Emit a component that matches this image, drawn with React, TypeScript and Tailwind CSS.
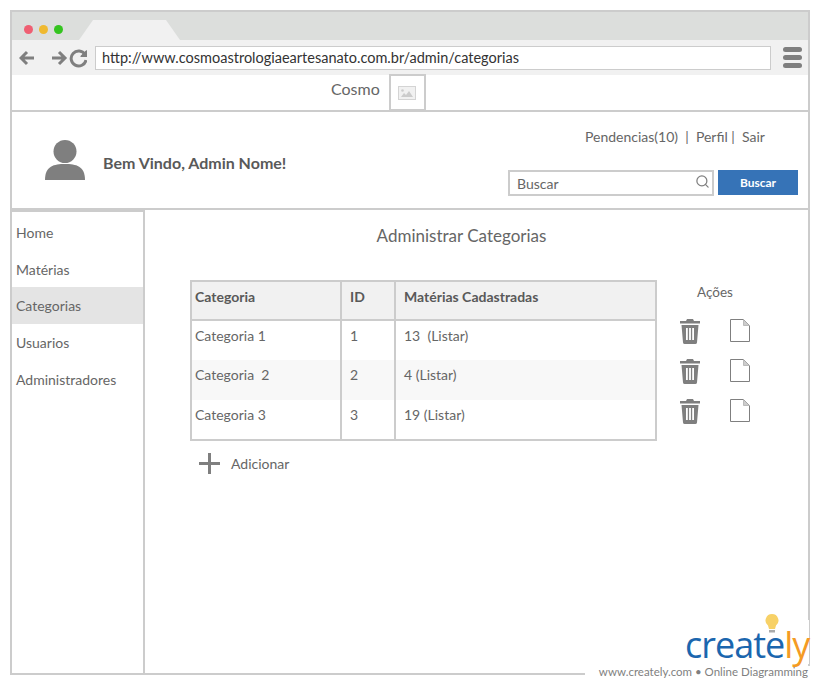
import { Search } from "lucide-react";

const menu = ["Home", "Matérias", "Categorias", "Usuarios", "Administradores"];

const rows = [
  { name: "Categoria 1", id: "1", count: "13  (Listar)", bg: "" },
  { name: "Categoria  2", id: "2", count: "4 (Listar)", bg: "bg-[#f8f8f8]" },
  { name: "Categoria 3", id: "3", count: "19 (Listar)", bg: "" },
];

const TrashIcon = () => (
  <svg width="20" height="25" viewBox="0 0 20 25" fill="#7f7f7f">
    <path d="M7 0h6l1 2h6v2.500H0V2h6z" />
    <path fillRule="evenodd" d="M1.500 6h17L17 23.500q-.2 1.500-1.700 1.500H4.700q-1.500 0-1.700-1.500zM6 9v12h1.800V9zm3.100 0v12h1.800V9zm3.100 0v12H14V9z" />
  </svg>
);

const DocIcon = () => (
  <svg width="20" height="23" viewBox="0 0 20 23" fill="none" stroke="#7f7f7f" strokeWidth="1">
    <path d="M.5.5h13l6 6v16H.5z" />
    <path d="M13.500.5v6h6" fill="#ccc" stroke="#bbb" />
  </svg>
);

export default function App() {
  return (
    <div className="relative h-[685px] w-[820px] overflow-hidden bg-white pl-[10px] pt-[10px] font-['Lato',sans-serif] text-[#595959]">
      <div className="flex h-[665px] w-[800px] flex-col border-2 border-[#cccccc]">
        {/* browser tabs */}
        <div className="relative h-[28px] shrink-0 bg-[#dcdedc]">
          <div className="absolute left-[12px] top-[13px] flex gap-[6px]">
            <span className="h-[9px] w-[9px] rounded-full bg-[#ef5f72]" />
            <span className="h-[9px] w-[9px] rounded-full bg-[#efb92f]" />
            <span className="h-[9px] w-[9px] rounded-full bg-[#34c41f]" />
          </div>
          <svg className="absolute left-[67px] top-[8px]" width="101" height="20" viewBox="0 0 101 20">
            <path d="M0 20 14 0h73l14 20z" fill="#f1f1f1" />
          </svg>
        </div>

        {/* browser toolbar */}
        <div className="flex h-[35px] shrink-0 items-center bg-[#f1f1f1] pl-[7px]">
          <svg width="68" height="22" viewBox="0 0 68 22" fill="none" stroke="#7f7f7f" strokeWidth="3" className="mt-[2px]">
            <path d="M15 10H2M8 4l-6 6 6 6" />
            <path d="M33 10h13M40 4l6 6-6 6" />
            <path d="M66 6.500A7.500 7.500 0 1 0 67 12" />
            <path d="M67.500 2v6h-6" fill="#7f7f7f" stroke="none" />
            <path d="M68 2v7h-7z" fill="#7f7f7f" stroke="none" />
          </svg>
          <div className="ml-[8px] flex h-[24px] w-[676px] items-center border border-[#cccccc] bg-white pl-[6px] text-[14.500px] text-[#333333]">
            http://www.cosmoastrologiaeartesanato.com.br/admin/categorias
          </div>
          <div className="ml-[12px] flex flex-col gap-[3px]">
            <span className="h-[5px] w-[19px] rounded-full bg-[#7f7f7f]" />
            <span className="h-[5px] w-[19px] rounded-full bg-[#7f7f7f]" />
            <span className="h-[5px] w-[19px] rounded-full bg-[#7f7f7f]" />
          </div>
        </div>

        {/* logo row */}
        <div className="flex h-[37px] shrink-0 border-b-2 border-[#cccccc] pl-[319px]">
          <span className="mt-[2px] text-[16px] text-[#666666]">Cosmo</span>
          <div className="ml-[9px] mt-[-1px] flex h-[37px] w-[37px] items-center justify-center border-2 border-[#cccccc] bg-white">
            <svg width="18" height="14" viewBox="0 0 18 14">
              <rect x="0.500" y="0.500" width="17" height="13" fill="#f1f1f1" stroke="#d4d4d4" />
              <path d="M3 11l3-4 2 2 3-4 4 6z" fill="#cccccc" />
              <circle cx="4.500" cy="4.500" r="1.300" fill="#cccccc" />
            </svg>
          </div>
        </div>

        {/* header */}
        <div className="flex h-[98px] shrink-0 border-b-2 border-[#cccccc]">
          <svg className="ml-[33px] mt-[28px]" width="40" height="40" viewBox="0 0 40 40" fill="#7f7f7f">
            <circle cx="20" cy="11.500" r="11.500" />
            <path d="M0 40c0-14 9-16 20-16s20 2 20 16z" />
          </svg>
          <span className="ml-[18px] mt-[41px] text-[16px] font-bold leading-[20px] text-[#595959]">Bem Vindo, Admin Nome!</span>
          <div className="ml-auto flex w-[300px] flex-col">
            <div className="mt-[16px] whitespace-pre pl-[77px] text-[14px] leading-[17px] text-[#666666]">
              Pendencias(10)  |  Perfil |  Sair
            </div>
            <div className="mt-[25px] flex items-start">
              <div className="relative flex h-[26px] w-[206px] items-center border-2 border-[#cccccc] pl-[7px] text-[14px] text-[#666666]">
                Buscar
                <Search size={15} strokeWidth={2} className="absolute right-[2px] top-[2px] text-[#7f7f7f]" />
              </div>
              <button className="ml-[4px] h-[25px] w-[80px] bg-[#3673b7] text-[12px] font-bold text-white">Buscar</button>
            </div>
          </div>
        </div>

        <div className="flex min-h-0 flex-1">
          {/* sidebar */}
          <nav className="flex w-[133px] shrink-0 flex-col border-r-2 border-t-2 border-[#cccccc] pt-[2px]">
            {menu.map((item) => (
              <div
                key={item}
                className={`flex h-[36.700px] items-center pl-[4px] text-[14px] text-[#666666] ${item === "Categorias" ? "bg-[#e4e4e4]" : ""}`}
              >
                {item}
              </div>
            ))}
          </nav>

          {/* content */}
          <main className="min-w-0 flex-1">
            <h1 className="mr-[30px] mt-[15px] text-center text-[17px] leading-[22px] text-[#666666]">Administrar Categorias</h1>
            <div className="ml-[45px] mt-[33px] flex items-start">
              <div>
                <table className="w-[467px] table-fixed border-collapse border-2 border-[#cccccc] text-[14px] text-[#666666]">
                  <colgroup>
                    <col className="w-[150px]" />
                    <col className="w-[54px]" />
                    <col />
                  </colgroup>
                  <thead>
                    <tr className="h-[39px] border-b-2 border-[#cccccc] bg-[#f1f1f1] align-top text-[#595959]">
                      <th className="border-r-2 border-[#cccccc] pl-[3px] pt-[4px] text-left font-bold">Categoria</th>
                      <th className="border-r-2 border-[#cccccc] pl-[8px] pt-[4px] text-left font-bold">ID</th>
                      <th className="pl-[8px] pt-[4px] text-left font-bold">Matérias Cadastradas</th>
                    </tr>
                  </thead>
                  <tbody>
                    {rows.map((row) => (
                      <tr key={row.id} className={`h-[40px] align-top whitespace-pre ${row.bg}`}>
                        <td className="border-r-2 border-[#cccccc] pl-[3px] pt-[4px]">{row.name}</td>
                        <td className="border-r-2 border-[#cccccc] pl-[8px] pt-[4px]">{row.id}</td>
                        <td className="pl-[8px] pt-[4px]">{row.count}</td>
                      </tr>
                    ))}
                  </tbody>
                </table>
                <div className="ml-[9px] mt-[12px] flex items-center">
                  <svg width="21" height="21" viewBox="0 0 21 21" fill="#7f7f7f">
                    <path d="M9 0h3v9h9v3h-9v9H9v-9H0V9h9z" />
                  </svg>
                  <span className="ml-[11px] text-[14px] text-[#666666]">Adicionar</span>
                </div>
              </div>

              <div className="ml-[23px] w-[70px]">
                <div className="mt-[4px] text-center text-[13.500px] leading-[17px] text-[#666666]">Ações</div>
                <div className="mt-[18px] flex flex-col gap-[15px]">
                  {rows.map((row) => (
                    <div key={row.id} className="flex items-start justify-between">
                      <TrashIcon />
                      <DocIcon />
                    </div>
                  ))}
                </div>
              </div>
            </div>
          </main>
        </div>
      </div>

      {/* creately watermark */}
      <div className="absolute bottom-[9px] right-[10px] h-[10px] w-[225px] bg-white" />
      <div className="absolute bottom-[6px] right-[12px] whitespace-pre bg-white pl-[6px] text-[11.500px] leading-[14px] text-[#7f7f7f]">
        www.creately.com • Online Diagramming
      </div>
      <div className="absolute right-[11px] top-[620px] h-[44px] w-[2px] bg-white" />
      <svg className="absolute left-[765px] top-[614px]" width="14" height="20" viewBox="0 0 14 20">
        <path d="M7 0a6.500 6.500 0 0 1 4 11.600L10 15H4l-1-3.400A6.500 6.500 0 0 1 7 0z" fill="#f7d167" />
        <rect x="4" y="16" width="6" height="2.500" fill="#aaaaaa" />
      </svg>
      <div className="absolute left-[685px] top-[620px] whitespace-pre font-['Open_Sans',sans-serif] text-[36px] leading-[50px] tracking-[-1px] text-[#1b66ae]">
        creat<span>e</span><span className="text-[#f49b24]">ly</span>
      </div>
    </div>
  );
}
